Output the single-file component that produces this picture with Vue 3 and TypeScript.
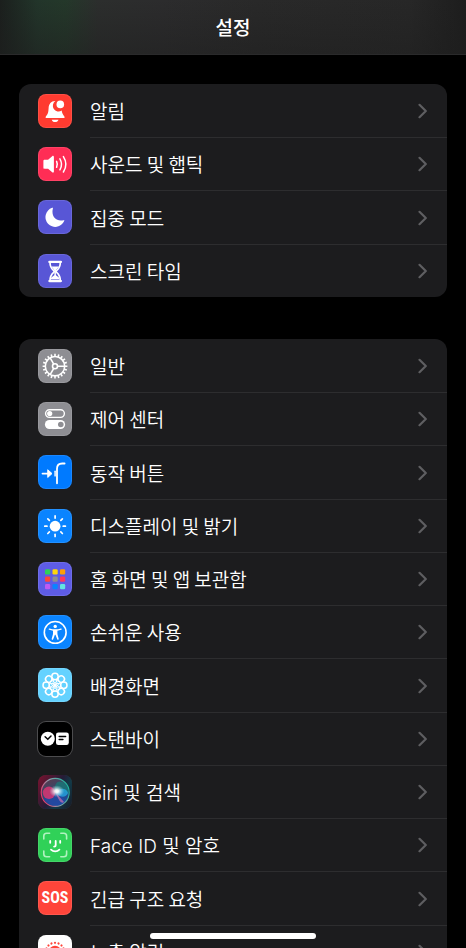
<script setup lang="ts">
interface Item {
  id: string
  label: string
  latin?: boolean
}

const groups: Item[][] = [
  [
    { id: 'bell', label: '알림' },
    { id: 'sound', label: '사운드 및 햅틱' },
    { id: 'focus', label: '집중 모드' },
    { id: 'time', label: '스크린 타임' },
  ],
  [
    { id: 'general', label: '일반' },
    { id: 'control', label: '제어 센터' },
    { id: 'action', label: '동작 버튼' },
    { id: 'display', label: '디스플레이 및 밝기' },
    { id: 'home', label: '홈 화면 및 앱 보관함' },
    { id: 'access', label: '손쉬운 사용' },
    { id: 'wallpaper', label: '배경화면' },
    { id: 'standby', label: '스탠바이' },
    { id: 'siri', label: 'Siri 및 검색', latin: true },
    { id: 'face', label: 'Face ID 및 암호', latin: true },
    { id: 'sos', label: '긴급 구조 요청' },
    { id: 'exposure', label: '노출 알림' },
  ],
]

const apps = [
  '#30d158', '#ffd60a', '#ff9f0a',
  '#ff453a', '#8e8e93', '#ff375f',
  '#bf5af2', '#0a84ff', '#63e6e2',
]

const steps = (count: number): number[] =>
  Array.from({ length: count }, (_, i) => (i * 360) / count)
</script>

<template>
  <div class="screen">
    <header class="bar"><h1>설정</h1></header>
    <main class="content">
      <nav v-for="(group, g) in groups" :key="g" class="group">
        <a v-for="item in group" :key="item.id" class="row" :href="'#' + item.id">
          <span class="icon" :class="item.id">
            <span v-if="item.id === 'sos'" class="sos-text">SOS</span>
            <svg v-else viewBox="0 0 34 34" aria-hidden="true">
              <g v-if="item.id === 'bell'" fill="#fff">
                <path d="M17.4 7.1C13 7 10.8 10.3 10.6 14.2c-.2 4.1-.7 5.8-2.4 7.7-.9 1-.9 2.2.5 2.2h16.8c1.4 0 1.4-1.2.5-2.2-1.2-1.4-2-2.8-2.3-5.3a5.4 5.4 0 0 1-6.3-9.5Z" />
                <circle cx="22.3" cy="10.4" r="3.8" />
                <path d="M13.7 25.8h6.8c-.5 1.5-1.7 2.3-3.4 2.3s-2.9-.8-3.4-2.3Z" />
              </g>
              <g v-else-if="item.id === 'sound'">
                <path fill="#fff" d="M6.6 12.8h3.5l4.1-3.6c.8-.7 1.7-.3 1.7.7v14.7c0 1-.9 1.4-1.7.7l-4.1-3.6H6.6c-.8 0-1.2-.4-1.2-1.2V14c0-.8.4-1.2 1.2-1.2Z" />
                <path fill="none" stroke="#fff" stroke-width="1.5" stroke-linecap="round" d="M18.6 14.3q1.5 3 0 6M21.9 11.8q3.3 5.5 0 11M25.4 9.6q5 7.8 0 15.4" />
              </g>
              <path v-else-if="item.id === 'focus'" fill="#fff" d="M14.9 8.5c.2-.7-.1-1-.8-.7A9.8 9.8 0 1 0 26.2 21.1c.4-.8 0-1.1-.8-.9C18 22 12.9 16.2 14.9 8.5Z" />
              <g v-else-if="item.id === 'time'">
                <path fill="none" stroke="#fff" stroke-width="1.7" d="M12 8.5c0 4.4 1.3 6.1 3.7 8.2.7.6.7 1 0 1.6-2.4 2.1-3.7 3.8-3.7 8.2h10.3c0-4.4-1.3-6.1-3.7-8.2-.7-.6-.7-1 0-1.6 2.4-2.1 3.7-3.8 3.7-8.2" />
                <path fill="#fff" d="M11.5 6.8h11.3q1.3 0 1.3 1.1T22.8 9H11.5q-1.3 0-1.3-1.1t1.3-1.1ZM11.5 26h11.3q1.3 0 1.3 1.1t-1.3 1.1H11.5q-1.3 0-1.3-1.1t1.3-1.1ZM13.4 12.4h7.5c-.8 1.6-2.5 2.5-3 4.1v4.4c.5 1.3 3.6 1.6 3.6 4.4H12.8c0-2.8 3.1-3.1 3.6-4.4v-4.4c-.5-1.6-2.2-2.5-3-4.1Z" />
              </g>
              <g v-else-if="item.id === 'general'" fill="none" stroke="#fff" stroke-width="1.6">
                <circle cx="17" cy="17.2" r="9.7" />
                <path v-for="a in steps(20)" :key="a" :transform="`rotate(${a} 17 17.2)`" d="M17 7.4V4.8" />
                <circle cx="17" cy="17.2" r="2.5" />
                <path v-for="a in steps(3)" :key="'s' + a" :transform="`rotate(${a} 17 17.2)`" d="M19.5 17.2h7.2" />
              </g>
              <g v-else-if="item.id === 'control'">
                <rect x="7.6" y="7.8" width="18.8" height="7.6" rx="3.8" fill="none" stroke="#fff" stroke-width="1.4" />
                <circle cx="11.7" cy="11.6" r="2.6" fill="#fff" />
                <rect x="6.9" y="18" width="20.2" height="9" rx="4.5" fill="#fff" />
                <circle cx="22.8" cy="22.5" r="2.8" fill="#8e8e93" />
              </g>
              <g v-else-if="item.id === 'action'" fill="none" stroke="#fff" stroke-width="1.8" stroke-linecap="round">
                <path d="M4.5 18.6h7" />
                <path fill="#fff" stroke-width="1" stroke-linejoin="round" d="m10 15 4 3.6-4 3.6Z" />
                <path d="M19 28.3V13.7c0-3.6 1.6-5.2 5.2-5.2h2.4" />
                <path stroke-width="1.4" d="M17.1 16.3v4.6" />
              </g>
              <g v-else-if="item.id === 'display'">
                <circle cx="17.1" cy="17.2" r="5.4" fill="#fff" />
                <path v-for="a in steps(8)" :key="a" :transform="`rotate(${a} 17.1 17.2)`" stroke="#fff" stroke-width="1.7" stroke-linecap="round" d="M17.1 9.1V6.9" />
              </g>
              <g v-else-if="item.id === 'home'">
                <rect v-for="(color, i) in apps" :key="color" :x="7 + (i % 3) * 7.5" :y="7.2 + Math.floor(i / 3) * 7.4" width="5.2" height="5.2" rx="1.2" :fill="color" />
              </g>
              <g v-else-if="item.id === 'access'">
                <circle cx="17.2" cy="17.4" r="10.9" fill="none" stroke="#fff" stroke-width="1.6" />
                <circle cx="17.2" cy="11.4" r="1.7" fill="#fff" />
                <path fill="#fff" d="M11.5 13.4c1.9.6 3.7.8 5.7.8s3.8-.2 5.7-.8c1-.2 1.2 1.1.3 1.4-1.3.5-2.6.8-3.8 1v3.3l1.3 4.7c.2 1-1.1 1.4-1.5.4l-1.7-4.4h-.6l-1.7 4.4c-.4 1-1.7.6-1.5-.4l1.3-4.7v-3.3c-1.2-.2-2.5-.5-3.8-1-.9-.3-.7-1.6.3-1.4Z" />
              </g>
              <g v-else-if="item.id === 'wallpaper'" fill="none" stroke="#fff" stroke-width="1.5">
                <circle v-for="a in steps(8)" :key="a" :transform="`rotate(${a} 17 17.3)`" cx="17" cy="8.5" r="3.2" />
                <ellipse v-for="a in steps(8)" :key="'e' + a" :transform="`rotate(${a} 17 17.3)`" cx="17" cy="14.3" rx="1.9" ry="3" stroke-width="0.9" />
              </g>
              <g v-else-if="item.id === 'standby'" fill="none" stroke="#000" stroke-width="1.5" stroke-linecap="round">
                <circle cx="9.8" cy="16.8" r="7" fill="#fff" stroke="none" />
                <path d="m7.1 14.7 2.7 2.5 3.2-3.2" />
                <rect x="18" y="10.4" width="12.8" height="12.6" rx="2.3" fill="#fff" stroke="none" />
                <path d="M21.2 14.6h6.4M21.2 17.4h3.7" />
              </g>
              <g v-else-if="item.id === 'siri'">
                <defs>
                  <linearGradient id="siri-back" x1="0" y1="0.2" x2="1" y2="0.8">
                    <stop offset="0" stop-color="#70132f" />
                    <stop offset="0.48" stop-color="#241c36" />
                    <stop offset="0.7" stop-color="#123a48" />
                    <stop offset="1" stop-color="#17202d" />
                  </linearGradient>
                  <linearGradient id="siri-ring" x1="0" y1="0.7" x2="1" y2="0.3">
                    <stop offset="0" stop-color="#f02f68" />
                    <stop offset="0.45" stop-color="#8e9dab" />
                    <stop offset="1" stop-color="#18b69b" />
                  </linearGradient>
                  <linearGradient id="siri-orb" x1="0.2" y1="0" x2="0.7" y2="1">
                    <stop offset="0" stop-color="#5b3a4c" />
                    <stop offset="0.5" stop-color="#2f4a70" />
                    <stop offset="1" stop-color="#174ca5" />
                  </linearGradient>
                  <radialGradient id="siri-glow">
                    <stop offset="0" stop-color="#fff" />
                    <stop offset="0.25" stop-color="#fff" stop-opacity="0.9" />
                    <stop offset="1" stop-color="#a6ddeb" stop-opacity="0" />
                  </radialGradient>
                </defs>
                <rect width="34" height="34" rx="8" fill="url(#siri-back)" />
                <circle cx="17.2" cy="17.4" r="14" fill="url(#siri-orb)" stroke="url(#siri-ring)" stroke-width="1.1" />
                <path fill="#167e78" opacity=".7" d="M17 16C16 8 20 5 25 7c5 3 6 8 5 12-5-4-9-4-13-3Z" />
                <path fill="#2447a7" opacity=".7" d="M17 17c-4 3-8 5-11 7 4 7 16 9 21 2-1-5-5-6-10-9Z" />
                <circle cx="11" cy="17.8" r="6.2" fill="#e53573" opacity=".8" />
                <path fill="#24a9e8" opacity=".75" d="M18 18c3-5 10-6 12 0-2 5-8 5-12 0Z" />
                <path fill="#e879ad" opacity=".6" d="m18 18 8 9c-2 2-5 0-8-9Z" />
                <ellipse cx="18.8" cy="16.2" rx="7.5" ry="6" fill="url(#siri-glow)" />
              </g>
              <g v-else-if="item.id === 'face'" fill="none" stroke-linecap="round" stroke-linejoin="round">
                <path stroke="#b0f2bf" stroke-width="1.6" d="M5.8 11V8c0-2 .8-2.8 2.8-2.8h3M22.8 5.2h3c2 0 2.8.8 2.8 2.8v3M28.6 23v3c0 2-.8 2.8-2.8 2.8h-3M11.6 28.8h-3c-2 0-2.8-.8-2.8-2.8v-3" />
                <path stroke="#fff" stroke-width="1.8" d="M12.2 13v1.8M22.2 13v1.8M17.7 13v4c0 1.2-.5 1.6-1.6 1.6M13 21.6c2.4 2.2 6 2.2 8.4 0" />
              </g>
              <g v-else fill="#ff453a">
                <circle cx="17" cy="17" r="6.2" />
                <circle v-for="a in steps(16)" :key="a" :transform="`rotate(${a} 17 17)`" cx="17" cy="7.8" r="1.1" />
              </g>
            </svg>
          </span>
          <span class="body">
            <span class="label" :class="{ latin: item.latin }">{{ item.label }}</span>
            <svg class="chevron" viewBox="0 0 10 16" aria-hidden="true">
              <path d="m1.5 1.8 6.3 6.2-6.3 6.2" />
            </svg>
          </span>
        </a>
      </nav>
    </main>
    <div class="home-indicator"></div>
  </div>
</template>

<style>
body {
  background: #000;
}
</style>

<style scoped>
.screen {
  position: relative;
  display: flex;
  flex-direction: column;
  height: 100vh;
  overflow: hidden;
  background: #000;
  color: #fff;
  font-family: "Noto Sans CJK KR", "Noto Sans", sans-serif;
}

.bar {
  display: flex;
  flex: none;
  align-items: center;
  justify-content: center;
  box-sizing: border-box;
  height: 55px;
  border-bottom: 1px solid #2a2a2b;
  background:
    linear-gradient(180deg, transparent 0%, rgba(30, 30, 30, 0.5) 100%),
    linear-gradient(90deg, #1b1f1d 0%, #22352a 8%, #24382a 14%, #2c2e2d 21%, #2c2c2d 35%, #292929 55%, #272727 88%, #1d1d1d 100%);
}

h1 {
  margin: 0;
  font-size: 19px;
  font-weight: 500;
  line-height: 28px;
}

.content {
  display: flex;
  flex: 1;
  flex-direction: column;
  gap: 42px;
  min-height: 0;
  padding: 29px 19px 0;
  overflow-y: auto;
  scrollbar-width: none;
}

.group {
  flex: none;
  overflow: hidden;
  border-radius: 12px;
  background: #1c1c1e;
}

.row {
  display: flex;
  gap: 18px;
  align-items: center;
  height: 53px;
  padding-left: 19px;
  color: inherit;
  text-decoration: none;
}

.row:nth-child(4n + 3) {
  height: 54px;
}

.icon {
  display: flex;
  flex: none;
  align-items: center;
  justify-content: center;
  width: 34px;
  height: 34px;
  border-radius: 8px;
  box-shadow: inset 0 0 0 1px rgba(255, 255, 255, 0.1);
}

.icon svg {
  width: 34px;
  height: 34px;
}

.bell { background: #ff3b30; }
.sound { background: #ff2d55; }
.focus, .time { background: #5856d6; }
.general, .control { background: #8e8e93; }
.action { background: #007aff; }
.display, .access { background: #0a84ff; }
.home { background: #5e5ce6; }
.wallpaper { background: #64d2ff; }
.standby { background: #000; box-shadow: 0 0 0 1px #4c4c4e; }
.face { background: #30d158; }
.sos { background: #ff453a; }
.exposure { background: #fff; }

.sos-text {
  font-family: "Liberation Sans Narrow", "Roboto Condensed", Roboto, sans-serif;
  font-size: 16px;
  font-weight: 700;
  line-height: 20px;
}

.body {
  display: flex;
  flex: 1;
  align-items: center;
  justify-content: space-between;
  box-sizing: border-box;
  height: 100%;
  padding-right: 19px;
  border-top: 1px solid #2d2d2f;
}

.row:first-child .body {
  border-top-color: transparent;
}

.label {
  font-size: 19px;
  font-weight: 350;
  line-height: 28px;
  white-space: nowrap;
}

.latin {
  padding-top: 4px;
  font-family: Inter, "Noto Sans CJK KR", sans-serif;
}

.chevron {
  flex: none;
  width: 10px;
  height: 16px;
}

.chevron path {
  fill: none;
  stroke: #5e5e61;
  stroke-width: 2.2;
  stroke-linecap: round;
  stroke-linejoin: round;
}

.home-indicator {
  position: absolute;
  right: 0;
  bottom: 9px;
  left: 0;
  width: 166px;
  height: 6px;
  margin: 0 auto;
  border-radius: 3px;
  background: #fff;
}
</style>
